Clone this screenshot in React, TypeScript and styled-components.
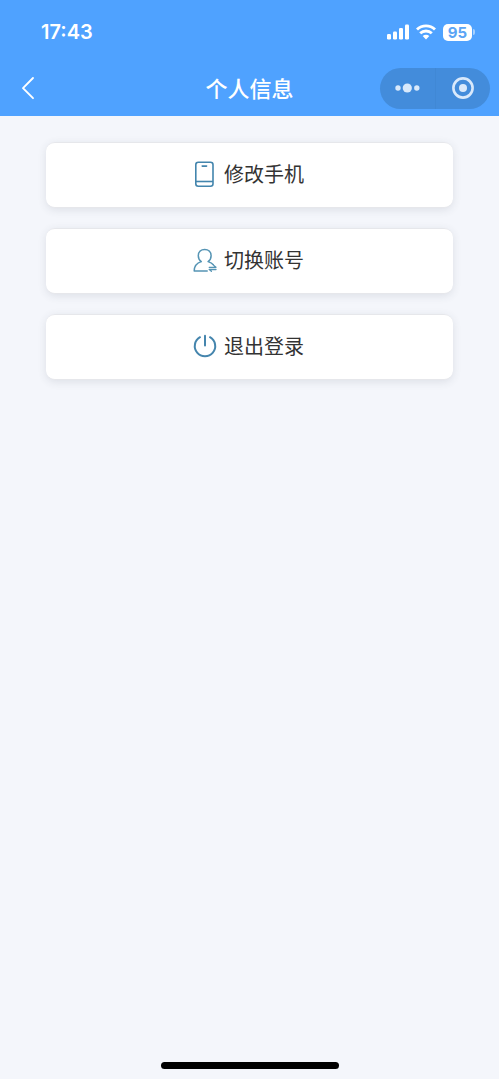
import React from "react";
import styled, { createGlobalStyle } from "styled-components";

const GlobalStyle = createGlobalStyle`
  * { box-sizing: border-box; }
  body {
    margin: 0;
    background: #f4f6fb;
    font-family: "Liberation Sans", "Noto Sans CJK SC", sans-serif;
  }
`;

const Screen = styled.div`
  display: flex;
  flex-direction: column;
  min-height: 100vh;
`;

const Header = styled.header`
  background: #4fa2ff;
  color: #fff;
`;

const StatusBar = styled.div`
  display: flex;
  align-items: center;
  justify-content: space-between;
  height: 60px;
  padding: 4px 24px 0 41px;
`;

const Clock = styled.time`
  font: 600 20px/24px Inter, sans-serif;
`;

const StatusIcons = styled.div`
  display: flex;
  align-items: center;
  gap: 7px;
`;

const Battery = styled.div`
  display: flex;
  align-items: center;
  gap: 1px;
`;

const BatteryLevel = styled.span`
  width: 29px;
  border-radius: 5px;
  background: #fff;
  color: #5ba5f5;
  font: 700 15px/17px Inter, sans-serif;
  text-align: center;
`;

const BatteryTip = styled.span`
  width: 2px;
  height: 6px;
  border-radius: 0 2px 2px 0;
  background: #a5d0ff;
`;

const NavBar = styled.div`
  display: grid;
  grid-template-columns: 1fr auto 1fr;
  align-items: center;
  height: 56px;
  padding: 0 9px;
`;

const IconButton = styled.button`
  display: flex;
  align-items: center;
  justify-content: center;
  width: 38px;
  height: 40px;
  padding: 0;
  border: 0;
  background: none;
  color: inherit;
  cursor: pointer;
`;

const Title = styled.h1`
  margin: 0;
  padding-bottom: 2px;
  font: 500 22px/32px "Noto Sans CJK SC", sans-serif;
`;

const Capsule = styled.div`
  display: flex;
  justify-self: end;
  width: 110px;
  height: 41px;
  border-radius: 21px;
  background: #438cdb;
  color: #d9e9fb;
`;

const CapsuleButton = styled(IconButton)`
  flex: 1;
  height: 100%;

  & + & {
    border-left: 1px solid #4088d5;
  }
`;

const Actions = styled.main`
  display: flex;
  flex: 1;
  flex-direction: column;
  gap: 20px;
  padding: 26px 46px;
`;

const ActionCard = styled.button`
  display: flex;
  align-items: center;
  justify-content: center;
  gap: 7px;
  height: 66px;
  padding: 0 2px 2px 0;
  border: 1px solid #e6e7eb;
  border-width: 1px 0;
  border-radius: 9px;
  background: #fff;
  box-shadow: 0 2px 8px rgba(60, 65, 80, 0.12);
  color: #333;
  font: 400 20px/30px "Noto Sans CJK SC", sans-serif;
  cursor: pointer;
`;

const HomeArea = styled.footer`
  display: flex;
  justify-content: center;
  padding-bottom: 10px;
`;

const HomeIndicator = styled.div`
  width: 178px;
  height: 7px;
  border-radius: 4px;
  background: #000;
`;

const SignalIcon = () => (
  <svg width="22" height="16" viewBox="0 0 22 16" fill="#fff" aria-hidden="true">
    <rect x="0" y="10" width="4" height="5.5" rx="1.2" />
    <rect x="6" y="7.5" width="4" height="8" rx="1.2" />
    <rect x="12" y="4" width="4" height="11.5" rx="1.2" />
    <rect x="18" y="0.5" width="4" height="15" rx="1.2" />
  </svg>
);

const WifiIcon = () => (
  <svg width="20" height="16" viewBox="0 0 20 16" fill="none" stroke="#fff" strokeWidth="2.9" aria-hidden="true">
    <path d="M1 5.5C6 0.6 14 0.6 19 5.5" />
    <path d="M4.2 9.3C7.4 6.3 12.6 6.3 15.8 9.3" />
    <path d="M10 15.4L6.7 12.1C8.5 10.4 11.5 10.4 13.3 12.1Z" fill="#fff" stroke="none" />
  </svg>
);

const BackIcon = () => (
  <svg width="24" height="24" viewBox="0 0 24 24" fill="none" stroke="currentColor" strokeWidth="1.9" strokeLinecap="round" strokeLinejoin="round" aria-hidden="true">
    <path d="M17 2L7 12.2L17 22.2" />
  </svg>
);

const MoreIcon = () => (
  <svg width="26" height="12" viewBox="0 0 26 12" fill="currentColor" aria-hidden="true">
    <circle cx="4" cy="6" r="2.7" />
    <circle cx="13.3" cy="6" r="4.6" />
    <circle cx="22.8" cy="6" r="2.7" />
  </svg>
);

const CloseIcon = () => (
  <svg width="24" height="24" viewBox="0 0 24 24" aria-hidden="true">
    <circle cx="12" cy="12" r="9.6" fill="none" stroke="currentColor" strokeWidth="2.6" />
    <circle cx="12" cy="12" r="4" fill="currentColor" />
  </svg>
);

const PhoneIcon = () => (
  <svg width="24" height="28" viewBox="0 0 24 28" fill="none" stroke="#4385ad" strokeWidth="1.6" aria-hidden="true">
    <rect x="2.8" y="2.3" width="17.2" height="24" rx="2.5" />
    <path d="M2.8 21.5H20" />
    <path d="M9.2 6.1H13.6" strokeLinecap="round" />
  </svg>
);

const SwitchUserIcon = () => (
  <svg width="24" height="26" viewBox="0 0 24 26" fill="none" stroke="#5594b4" strokeWidth="1.5" strokeLinecap="round" strokeLinejoin="round" aria-hidden="true">
    <path d="M14.2 24H1.2C1.2 19.2 3.6 16 8.3 14.6C6.4 13.3 5.3 11.3 5.3 8.7C5.3 4.8 8 2.4 11.7 2.4S18.1 4.8 18.1 8.7C18.1 11.3 17 13.3 15.1 14.6C17.4 15.3 19.2 16.3 20.3 17.7" />
    <path d="M16.2 20.3H23L20.8 18.5M23 22.5H16.2L18.4 24.3" strokeWidth="1.3" />
  </svg>
);

const PowerIcon = () => (
  <svg width="24" height="26" viewBox="0 0 24 26" fill="none" stroke="#4585ad" strokeWidth="2" strokeLinecap="round" aria-hidden="true">
    <path d="M7 4.2A10.2 10.2 0 1 0 17 4.2" />
    <path d="M12 2.7V12.5" />
  </svg>
);

const actions = [
  { label: "修改手机", Icon: PhoneIcon },
  { label: "切换账号", Icon: SwitchUserIcon },
  { label: "退出登录", Icon: PowerIcon },
];

export default function App() {
  return (
    <Screen>
      <GlobalStyle />
      <Header>
        <StatusBar>
          <Clock>17:43</Clock>
          <StatusIcons>
            <SignalIcon />
            <WifiIcon />
            <Battery>
              <BatteryLevel>95</BatteryLevel>
              <BatteryTip />
            </Battery>
          </StatusIcons>
        </StatusBar>
        <NavBar>
          <IconButton type="button" aria-label="返回">
            <BackIcon />
          </IconButton>
          <Title>个人信息</Title>
          <Capsule>
            <CapsuleButton type="button" aria-label="更多">
              <MoreIcon />
            </CapsuleButton>
            <CapsuleButton type="button" aria-label="关闭">
              <CloseIcon />
            </CapsuleButton>
          </Capsule>
        </NavBar>
      </Header>
      <Actions>
        {actions.map(({ label, Icon }) => (
          <ActionCard key={label} type="button">
            <Icon />
            {label}
          </ActionCard>
        ))}
      </Actions>
      <HomeArea>
        <HomeIndicator />
      </HomeArea>
    </Screen>
  );
}
